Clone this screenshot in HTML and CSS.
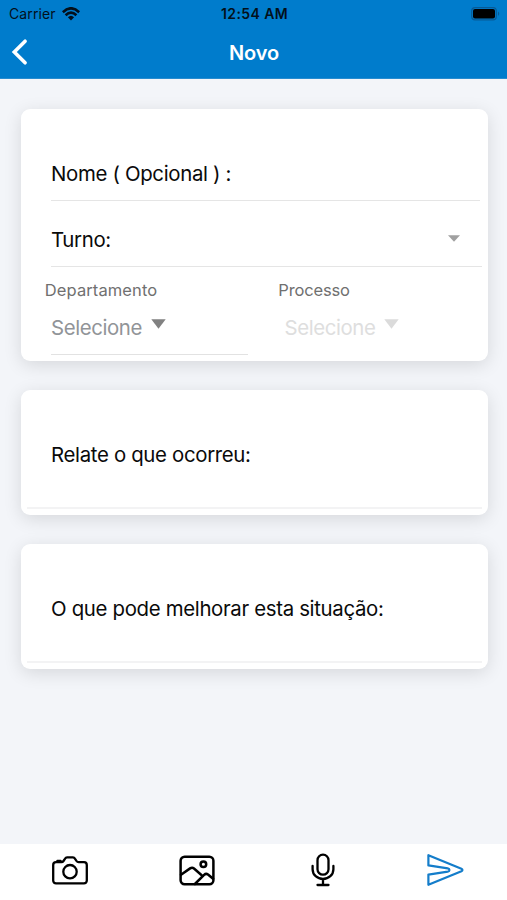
FILE: index.html
```html
<!DOCTYPE html>
<html lang="pt-BR">
<head>
<meta charset="utf-8">
<meta name="viewport" content="width=device-width, initial-scale=1">
<title>Novo</title>
<link rel="stylesheet" href="styles.css">
</head>
<body>
<div class="app">
  <header class="header">
    <div class="status">
      <div class="network">
        <span class="carrier">Carrier</span>
        <svg class="wifi" width="18" height="14" viewBox="0 0 18 14" fill="none" stroke="#03101b" stroke-width="2.6"><path d="M.8 5.2Q9-2.6 17.2 5.2"/><path d="M3.6 8.2Q9 3 14.4 8.2"/><path d="M5.9 10.3Q9 7.3 12.1 10.3L9 13.5Z" fill="#03101b" stroke="none"/></svg>
      </div>
      <span class="clock">12:54 AM</span>
      <svg class="battery" width="30" height="14" viewBox="0 0 30 14"><rect x=".7" y=".7" width="24.6" height="12.2" rx="3.4" fill="none" stroke="#075a96" stroke-width="1.2"/><rect x="2" y="2" width="22" height="9.6" rx="2" fill="#000"/><path d="M27 4.5Q29.5 6.7 27 9Z" fill="#075a96"/></svg>
    </div>
    <nav class="nav">
      <svg class="back" width="18" height="28" viewBox="0 0 18 28" fill="none" stroke="#fff" stroke-width="3.6" stroke-linecap="round" stroke-linejoin="miter"><path d="M14.1 3.2 3.3 14 14.1 24.8"/></svg>
      <h1 class="title">Novo</h1>
    </nav>
  </header>
  <main class="content">
    <section class="card form">
      <div class="field name"><span class="label">Nome ( Opcional ) :</span></div>
      <div class="field shift"><span class="label">Turno:</span>
        <svg class="caret" width="12" height="7" viewBox="0 0 12 7"><path d="M0 .3h12L6 6.7Z" fill="#a0a0a0"/></svg>
      </div>
      <div class="columns">
        <div class="column">
          <span class="caption">Departamento</span>
          <div class="select"><span>Selecione</span><svg width="15" height="10" viewBox="0 0 15 10"><path d="M.3.2h14.4L7.5 9.8Z" fill="#818181"/></svg></div>
        </div>
        <div class="column">
          <span class="caption processo">Processo</span>
          <div class="select disabled"><span>Selecione</span><svg width="15" height="10" viewBox="0 0 15 10"><path d="M.3.2h14.4L7.5 9.8Z" fill="#dbdbdb"/></svg></div>
        </div>
      </div>
    </section>
    <section class="card note"><span class="label">Relate o que ocorreu:</span></section>
    <section class="card note"><span class="label">O que pode melhorar esta situação:</span></section>
  </main>
  <footer class="tabs">
    <svg class="camera" width="36" height="29" viewBox="0 0 36 29" fill="none" stroke="#000" stroke-width="2.3" stroke-linejoin="round"><path d="M9.4 6.2c1 0 1.5-.3 2.1-1.2l1.4-2.2c.6-1 1.2-1.4 2.2-1.4h5.8c1 0 1.6.4 2.2 1.4L24.5 5c.6.9 1.1 1.2 2.1 1.2H32a2.8 2.8 0 0 1 2.8 2.8v15.6a2.8 2.8 0 0 1-2.8 2.8H4a2.8 2.8 0 0 1-2.8-2.8V9A2.8 2.8 0 0 1 4 6.2Z"/><circle cx="18" cy="15.7" r="6.7"/><path d="M5.4 6V4.8h3.2V6"/></svg>
    <svg class="image" width="36" height="31" viewBox="0 0 36 31" fill="none" stroke="#000" stroke-width="2.5" stroke-linejoin="round" stroke-linecap="round"><rect x="1.6" y="1.7" width="32.8" height="27.6" rx="4"/><circle cx="24.4" cy="9.3" r="2.8"/><path d="m2 19.7 9.1-6.3c1.4-1 2.6-1 3.9.1l7.4 6.5M15.9 29l9.2-9.2c1.3-1.2 2.5-1.3 3.9-.3l5.1 4.3"/></svg>
    <svg class="mic" width="24" height="34" viewBox="0 0 24 34" fill="none" stroke="#000" stroke-width="2.3" stroke-linecap="round"><rect x="6.5" y="1.7" width="11" height="20" rx="5.5"/><path d="M1.6 13v3.2c0 5.6 4.7 9.8 10.4 9.8s10.4-4.2 10.4-9.8V13M12 26v6M6.5 32h11"/></svg>
    <svg class="send" width="38" height="34" viewBox="0 0 38 34" fill="none" stroke="#147dca" stroke-width="2.2" stroke-linejoin="round"><path d="M2.4 2.2v10.2l19.4 2.9c2.2.4 2.2 3 0 3.4L2.4 21.6v10.2L35.4 18.2c1.4-.7 1.4-1.7 0-2.4Z"/></svg>
  </footer>
</div>
</body>
</html>
```

FILE: styles.css
```css
* { box-sizing: border-box; }
body { margin: 0; background: #f3f5f9; font-family: Inter, sans-serif; color: #0a0a0a; }
.app { height: 900px; display: flex; flex-direction: column; overflow: hidden; }
.header { height: 79px; flex: none; background: #007ccc; border-bottom: 1px solid #278cd0; }
.status { height: 27px; display: grid; grid-template-columns: 1fr auto 1fr; padding: 0 7px 0 9px; align-items: center; color: #03101b; }
.network { display: flex; align-items: center; gap: 6.5px; }
.carrier { font-size: 14px; line-height: 20px; letter-spacing: .1px; }
.clock { font-size: 14px; font-weight: 600; line-height: 20px; letter-spacing: .4px; }
.battery { justify-self: end; margin-right: -1px; }
.nav { height: 51px; display: grid; grid-template-columns: 1fr auto 1fr; align-items: center; padding: 0 10px 0 11px; }
.back { margin-top: -1px; }
.title { margin: 0; font-size: 20px; font-weight: 600; line-height: 26px; letter-spacing: -.1px; color: #fff; }
.content { flex: 1; padding: 29.5px 19.5px 0 20.5px; display: flex; flex-direction: column; gap: 29px; }
.card { background: #fff; border-radius: 9px; box-shadow: 0 4px 18px rgba(0,0,0,.12); }
.form { height: 252px; padding: 26.2px 6px 0 30.5px; }
.field { height: 66px; border-bottom: 1px solid #e5e5e5; display: flex; align-items: center; justify-content: space-between; padding-top: 13px; }
.name { margin-right: 2px; }
.label { font-size: 20.4px; line-height: 26px; letter-spacing: -.33px; white-space: nowrap; }
.caret { margin-right: 21.5px; margin-top: -3px; }
.columns { display: grid; grid-template-columns: 233.5px 1fr; margin-left: -6.2px; }
.column { padding-top: 12px; }
.caption { display: block; font-size: 16.5px; line-height: 22px; letter-spacing: .1px; color: #707070; }
.processo { letter-spacing: -.15px; }
.select { width: 197px; height: 54px; margin-left: 6.2px; border-bottom: 1px solid #e2e2e2; display: flex; gap: 9px; align-items: center; font-size: 20.4px; letter-spacing: -.4px; color: #919498; }
.select svg { margin-top: -6px; }
.disabled { color: #dedede; border-color: transparent; }
.note { height: 125px; padding: 52px 6px 6px 6px; display: flex; flex-direction: column; }
.note .label { height: 67px; padding-left: 24.5px; border-bottom: 2px solid #f3f3f4; }
.tabs { height: 56px; background: #fff; display: grid; grid-template-columns: 127px 127px 126px 1fr; justify-items: center; align-items: center; padding: 0 0 4px 6px; }
.send { margin-right: 3px; }
```
